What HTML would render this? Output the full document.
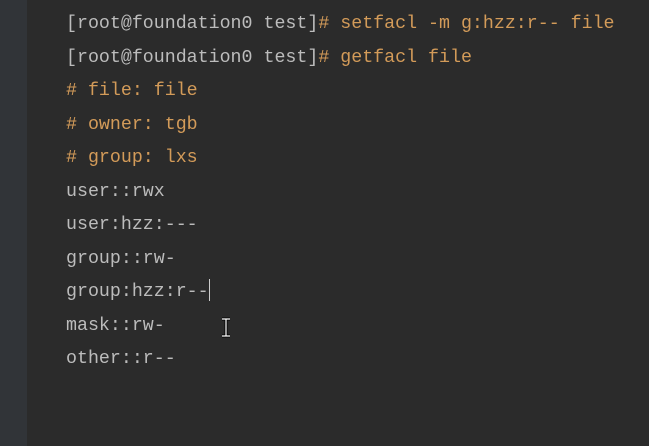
<!DOCTYPE html>
<html><head><style>
html,body{margin:0;padding:0;}
body{width:649px;height:446px;background:#2b2b2b;position:relative;overflow:hidden;font-family:"Liberation Mono",monospace;}
.side{position:absolute;left:0;top:0;width:27px;height:446px;background:#313438;}
.l{position:absolute;left:66px;font-size:18.3px;line-height:20px;color:#bcbcbc;white-space:pre;}
.o{color:#d39b59;}
.cur{position:absolute;left:209px;top:279px;width:1px;height:22px;background:#ccc;}
</style></head><body>
<div class="side"></div>
<div class="l" style="top:14px">[root@foundation0 test]<span class="o"># setfacl -m g:hzz:r-- file</span></div>
<div class="l" style="top:48px">[root@foundation0 test]<span class="o"># getfacl file</span></div>
<div class="l o" style="top:81px"># file: file</div>
<div class="l o" style="top:115px"># owner: tgb</div>
<div class="l o" style="top:148px"># group: lxs</div>
<div class="l" style="top:182px">user::rwx</div>
<div class="l" style="top:215px">user:hzz:---</div>
<div class="l" style="top:249px">group::rw-</div>
<div class="l" style="top:282px">group:hzz:r--</div>
<div class="l" style="top:316px">mask::rw-</div>
<div class="l" style="top:349px">other::r--</div>
<div class="cur"></div>
<svg style="position:absolute;left:220px;top:317px" width="12" height="22" viewBox="0 0 12 22"><path d="M2 2h8M6 2v17M2 19h8" stroke="#000" stroke-width="3" fill="none"/><path d="M2 2h8M6 2v17M2 19h8" stroke="#fff" stroke-width="1.2" fill="none"/></svg>
</body></html>
